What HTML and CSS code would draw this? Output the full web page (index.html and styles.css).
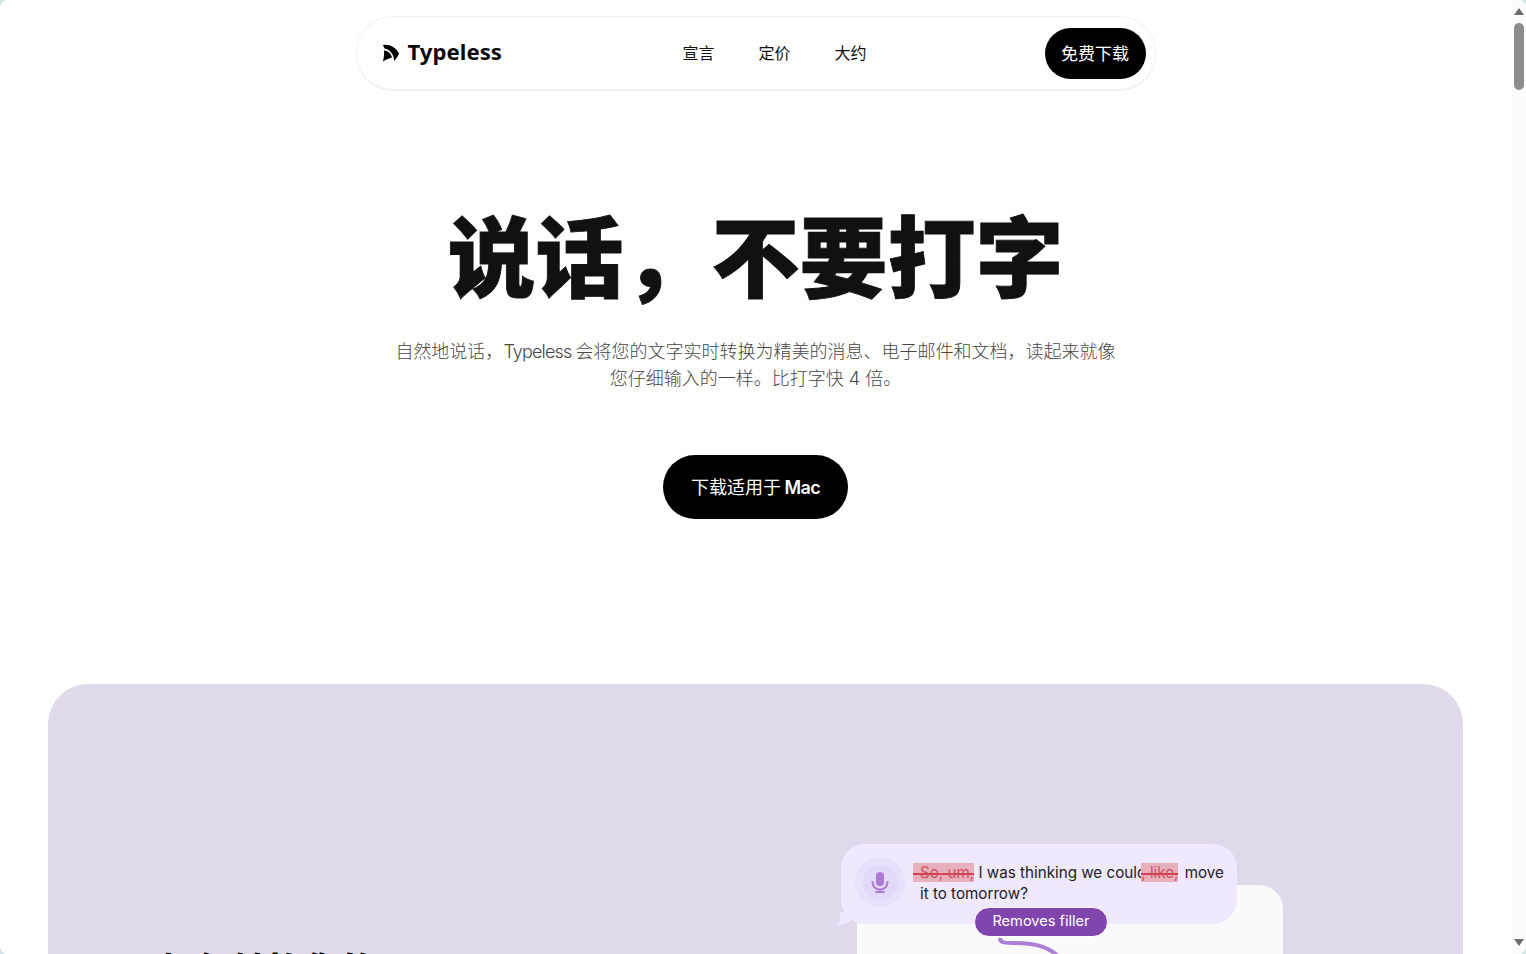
FILE: index.html
```html
<!DOCTYPE html>
<html lang="zh-CN">
<head>
<meta charset="utf-8">
<title>Typeless</title>
<link rel="stylesheet" href="styles.css">
</head>
<body>
<div class="window">
  <main class="page">
    <header class="nav-wrap">
      <nav class="nav">
        <a class="brand" href="#">
          <svg class="brand-icon" viewBox="0 0 18 18" aria-hidden="true">
            <path d="M1 1C7 0 14 3 17 9.500C15.800 12.500 14.300 14.800 12 17C12.500 11 8 5.500 2.500 4.500L1 1Z"/>
            <path d="M2 6.500C6 6.500 9 9.500 10 13.500C6.800 14.300 3.500 15.800 1 17.500C1.800 14 2.300 10.300 2 6.500Z"/>
          </svg>
          <span>Typeless</span>
        </a>
        <div class="links">
          <a href="#">宣言</a>
          <a href="#">定价</a>
          <a href="#">大约</a>
        </div>
        <a class="nav-cta" href="#">免费下载</a>
      </nav>
    </header>
    <section class="hero">
      <h1>说话，不要打字</h1>
      <p>自然地说话，<span class="latin">Typeless </span>会将您的文字实时转换为精美的消息、电子邮件和文档，读起来就像您仔细输入的一样。比打字快 4 倍。</p>
      <a class="hero-cta" href="#"><span>下载适用于 <b class="mac">Mac</b></span></a>
    </section>
    <section class="panel">
      <h2>如何转换您的</h2>
      <div class="demo">
        <div class="sheet"></div>
        <div class="bubble">
          <div class="mic-outer"><div class="mic-inner">
            <svg viewBox="0 0 24 24" aria-hidden="true">
              <rect x="8" y="2" width="8" height="14" rx="4" class="mic-fill"/>
              <path d="M4.500 12C4.500 16.800 8 19.500 12 19.500C16 19.500 19.500 16.800 19.500 12M12 19.500V22M8 22H16" class="mic-line"/>
            </svg>
          </div></div>
          <div class="speech">
            <span class="cut first">So, um,</span> I was thinking we could<span class="cut second">, like,</span> move it to tomorrow?
          </div>
          <svg class="tail" viewBox="0 0 20 16" aria-hidden="true"><path d="M5 0V7C5 9.500 3.500 11 1 12.500C7 13.500 11 12 15 9L20 0Z"/></svg>
        </div>
        <div class="tag"><span>Removes filler</span></div>
        <svg class="squiggle" viewBox="0 0 62 18" aria-hidden="true"><path d="M2 0C2 4 5 5 14 5C34 5 48 7 60 18"/></svg>
      </div>
    </section>
  </main>
  <div class="scrollbar">
    <div class="arrow up"></div>
    <div class="track"><div class="thumb"></div></div>
    <div class="arrow down"></div>
  </div>
</div>
</body>
</html>
```
FILE: styles.css
```css
* { box-sizing: border-box; }
html, body { margin: 0; height: 100%; overflow: hidden; background: #cfe3e4; }
body {
  font-family: Inter, "Noto Sans CJK SC", sans-serif;
  color: #111;
}
a { color: inherit; text-decoration: none; }

.window { display: flex; height: 954px; width: 1526px; background: #fff; border-radius: 8px; overflow: hidden; }
.page { width: 1511px; height: 954px; overflow: hidden; flex: none; }

.nav-wrap { display: flex; justify-content: center; padding-top: 16px; }
.nav {
  width: 800px; height: 75px;
  display: grid; grid-template-columns: 1fr auto 1fr; align-items: center;
  padding: 0 9px 0 26px;
  border: 1px solid #f1f1f1; border-bottom-width: 2px;
  border-radius: 37px; background: #fff;
}
.brand { display: flex; align-items: center; gap: 7px; font: 700 22.200px "Noto Sans", sans-serif; color: #0b0b0b; padding-bottom: 4px; }
.brand-icon { width: 18px; height: 18px; fill: #000; margin-top: 4px; margin-left: -1px; margin-right: 1px; }
.links { display: flex; gap: 44px; font-size: 16px; color: #111; margin-left: 21px; padding-bottom: 2px; }
.nav-cta {
  justify-self: end;
  display: flex; align-items: center; justify-content: center;
  width: 101px; height: 51px; border-radius: 26px; padding-bottom: 2px;
  background: #000; color: #fff; font-size: 17px;
}

.hero { display: flex; flex-direction: column; align-items: center; padding-top: 111px; }
.hero h1 {
  margin: 0; font-size: 88px; line-height: 112px; font-weight: 900;
  -webkit-text-stroke: 0.8px #111; color: #111;
}
.hero p {
  margin: 24px 0 0; width: 730px; text-align: center;
  font-size: 18px; line-height: 27px; font-weight: 300; color: #474747;
}
.latin { letter-spacing: -0.85px; }
.hero-cta {
  margin-top: 63px;
  display: flex; align-items: center; justify-content: center;
  width: 185px; height: 64px; border-radius: 32px; padding-bottom: 2px;
  background: #000; color: #fff; font-size: 18px; font-weight: 400; word-spacing: -1.500px;
}
.mac { font-weight: 600; letter-spacing: -0.6px; }

.panel {
  margin: 165px 48px 0; height: 500px; width: 1415px;
  position: relative; background: #e0d9ea; border-radius: 40px;
}
.panel h2 {
  position: absolute; left: 112px; top: 265px; margin: 0;
  font-size: 36px; line-height: 44px; font-weight: 900; color: #000;
}
.demo { position: absolute; left: 0; top: 0; width: 100%; height: 100%; }
.sheet {
  position: absolute; left: 809px; top: 201px; width: 426px; height: 260px;
  background: #fafafa; border-radius: 24px;
}
.bubble {
  position: absolute; left: 793px; top: 160px; width: 396px; height: 80px;
  display: flex; gap: 8px; padding: 13px 6px 0 14px;
  background: #efe8fe; border-radius: 24px;
}
.mic-outer {
  width: 50px; height: 50px; flex: none; border-radius: 50%;
  background: #e9e0fc; display: flex; align-items: center; justify-content: center;
}
.mic-inner {
  width: 35px; height: 35px; border-radius: 50%; background: #e3d8f8;
  display: flex; align-items: center; justify-content: center;
}
.mic-inner svg { width: 24px; height: 24px; flex: none; }
.mic-fill { fill: #ad7bd4; }
.mic-line { fill: none; stroke: #ad7bd4; stroke-width: 2; stroke-linecap: round; }
.speech { font-size: 15.200px; line-height: 21px; color: #222; padding: 5px 0 0 7px; flex: 1; }
.cut {
  position: relative;
  background: #e8afbd; color: #d4505f;
}
.cut.first { margin-left: -7px; padding-left: 7px; }
.cut.second { margin-left: -5px; margin-right: 2px; }
.cut::after {
  content: ""; position: absolute; left: 0; right: 0; top: 50%; height: 2px;
  background: #cf4552;
}
.tail { position: absolute; left: -6px; bottom: -4px; width: 20px; height: 16px; fill: #efe8fe; }
.tag {
  position: absolute; left: 926px; top: 223px; width: 134px; height: 30px;
  display: flex; align-items: center; justify-content: center;
  background: #8146ae; color: #fff; font-size: 14.600px; padding-bottom: 2px;
  border: 1.500px solid #fff; border-radius: 16px;
}
.squiggle {
  position: absolute; left: 950px; top: 254px; width: 62px; height: 18px;
  fill: none; stroke: #ac7fd8; stroke-width: 4; stroke-linecap: round;
}

.scrollbar { width: 15px; height: 954px; flex: none; background: #fcfcfc; display: flex; flex-direction: column; align-items: center; }
.arrow { width: 0; height: 0; border-left: 5px solid transparent; border-right: 5px solid transparent; }
.arrow.up { margin-top: 8px; border-bottom: 7px solid #6d6d6d; }
.arrow.down { margin-bottom: 8px; border-top: 7px solid #6d6d6d; }
.track { flex: 1; width: 100%; padding: 8px 2.500px 0; }
.thumb { height: 67px; background: #8c8c8c; border-radius: 5px; }
```
